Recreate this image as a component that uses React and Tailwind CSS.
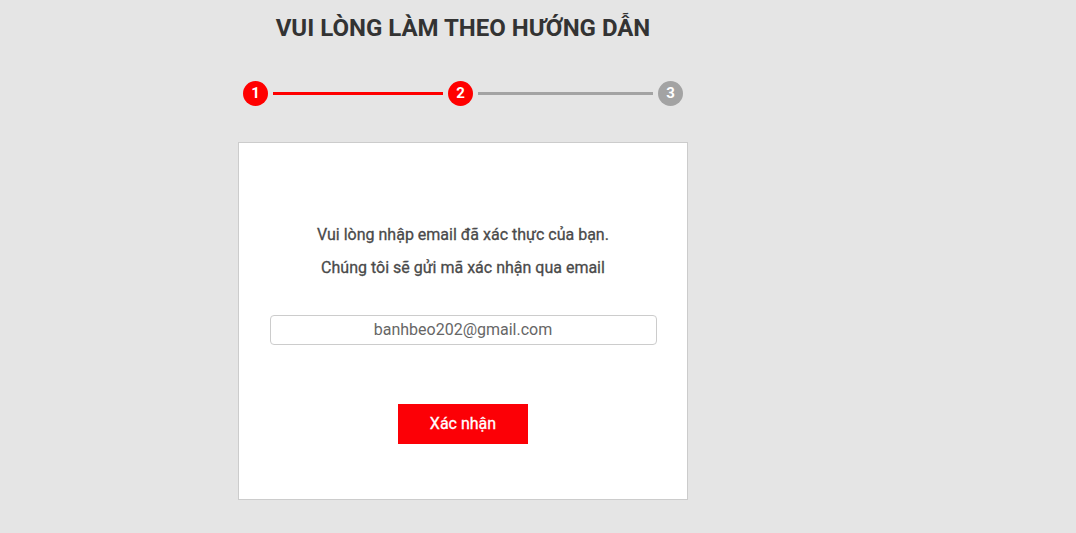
export default function App() {
  const font = { fontFamily: "Roboto, 'Noto Sans', sans-serif" };
  return (
    <div className="min-h-[533px] w-full bg-[#e5e5e5]" style={font}>
      <div className="ml-[238px] w-[450px] pt-[14px] pb-[33px]">
        <h1 className="text-center text-[24px] leading-[28px] font-bold text-[#333333]">
          VUI LÒNG LÀM THEO HƯỚNG DẪN
        </h1>
        <div className="mt-[39px] ml-[5px] flex w-[440px] items-center">
          <div className="flex h-[25px] w-[25px] shrink-0 items-center justify-center rounded-full bg-[#ff0000] text-[15px] font-bold text-white">1</div>
          <div className="mx-[5px] h-[3px] w-[170px] bg-[#ff0000]"></div>
          <div className="flex h-[25px] w-[25px] shrink-0 items-center justify-center rounded-full bg-[#ff0000] text-[15px] font-bold text-white">2</div>
          <div className="mx-[5px] h-[3px] w-[175px] bg-[#a3a3a3]"></div>
          <div className="flex h-[25px] w-[25px] shrink-0 items-center justify-center rounded-full bg-[#a3a3a3] text-[15px] font-bold text-white">3</div>
        </div>
        <div className="mt-[36px] flex h-[358px] flex-col items-center border border-[#cccccc] bg-white">
          <p className="mt-[80px] text-[16px] leading-[24px] font-normal text-[#4a4a4a] [-webkit-text-stroke:0.3px_#4a4a4a]">
            Vui lòng nhập email đã xác thực của bạn.
          </p>
          <p className="mt-[9px] text-[16px] leading-[24px] font-normal text-[#4a4a4a] [-webkit-text-stroke:0.3px_#4a4a4a]">
            Chúng tôi sẽ gửi mã xác nhận qua email
          </p>
          <div className="mt-[35px] flex h-[30px] w-[387px] items-center justify-center rounded-[4px] border border-[#cccccc] text-[16px] text-[#666666]">
            banhbeo202@gmail.com
          </div>
          <button className="mt-[59px] flex h-[40px] w-[130px] items-center justify-center bg-[#fc0006] text-[16px] font-normal text-white [-webkit-text-stroke:0.3px_#ffffff]">
            Xác nhận
          </button>
        </div>
      </div>
    </div>
  );
}
